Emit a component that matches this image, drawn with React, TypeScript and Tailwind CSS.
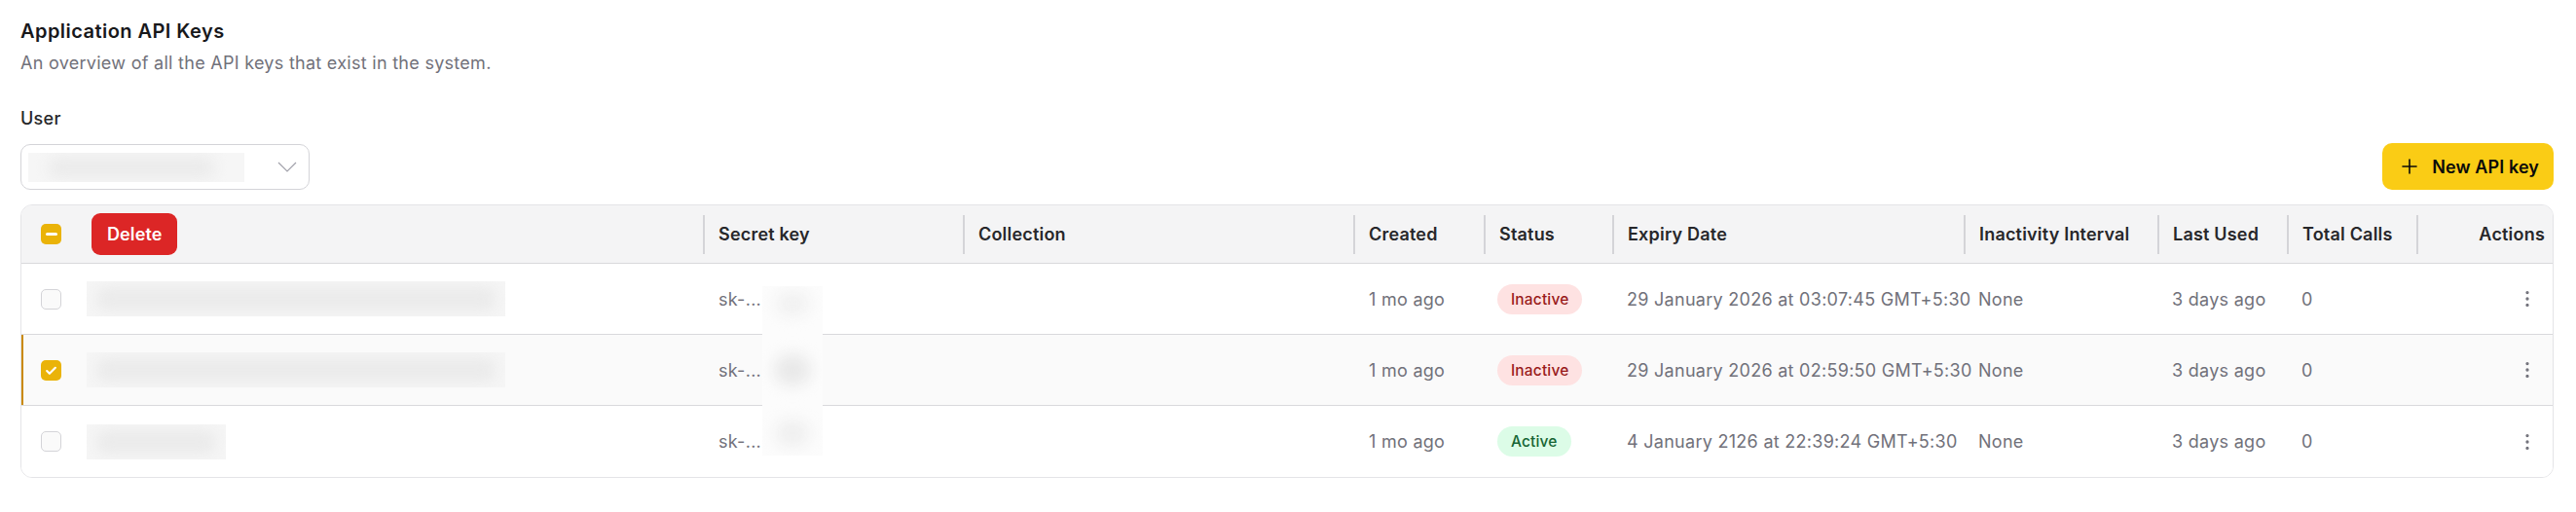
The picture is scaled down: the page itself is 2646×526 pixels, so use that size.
import { Plus, EllipsisVertical } from "lucide-react"

const cols = "grid grid-cols-[56px_644px_267px_401px_134px_132px_361px_199px_133px_133px_140px]"

type Row = {
  nameWidth: number
  expiry: string
  status: "Active" | "Inactive"
  selected: boolean
}

const rows: Row[] = [
  { nameWidth: 430, expiry: "29 January 2026 at 03:07:45 GMT+5:30", status: "Inactive", selected: false },
  { nameWidth: 430, expiry: "29 January 2026 at 02:59:50 GMT+5:30", status: "Inactive", selected: true },
  { nameWidth: 143, expiry: "4 January 2126 at 22:39:24 GMT+5:30", status: "Active", selected: false },
]

function Checkbox({ state }: { state: "off" | "on" | "some" }) {
  if (state === "off") {
    return <div className="h-[21px] w-[21px] rounded-[5px] border border-[#d4d4d8] bg-[#fafafa]" />
  }
  return (
    <div className="flex h-[21px] w-[21px] items-center justify-center rounded-[5px] bg-[#eab308]">
      {state === "some" ? (
        <div className="h-[3px] w-[12px] rounded-full bg-white" />
      ) : (
        <svg width="13" height="13" viewBox="0 0 24 24" fill="none" stroke="white" strokeWidth="4" strokeLinecap="round" strokeLinejoin="round">
          <path d="M4 13l5 5L20 7" />
        </svg>
      )}
    </div>
  )
}

function HeadCell({ children, right }: { children?: React.ReactNode; right?: boolean }) {
  return (
    <div className="flex items-center">
      <div className={`flex h-[40px] w-full items-center border-l-2 border-[#d4d4d8] ${right ? "justify-end pr-[8px]" : "pl-[14px]"}`}>
        {children}
      </div>
    </div>
  )
}

function Blurred({ width }: { width: number }) {
  return (
    <div className="relative h-[36px] overflow-hidden bg-[#f5f5f5]" style={{ width }}>
      <div className="absolute inset-y-[6px] left-[10px] right-[10px] rounded-full bg-[#ebebeb] blur-[6px]" />
    </div>
  )
}

export default function App() {
  return (
    <div className="min-h-screen bg-white pl-[21px] pr-[23px] pt-[18px] font-['Inter','Liberation_Sans',sans-serif] text-[18px] leading-[25px] tracking-[0.28px]">
      <h1 className="text-[20px] font-semibold leading-[28px] tracking-[0.45px] text-[#18181b]">Application API Keys</h1>
      <p className="mt-[6px] text-[#71717a]">An overview of all the API keys that exist in the system.</p>

      <div className="mt-[32px] flex items-end justify-between">
        <div>
          <label className="block font-medium text-[#27272a]">User</label>
          <div className="mt-[14px] flex h-[47px] w-[297px] items-center justify-between rounded-[10px] border border-[#d4d4d8] pl-[7px] pr-[12px]">
            <div className="relative h-[30px] w-[222px] overflow-hidden bg-[#f6f6f6]">
              <div className="absolute inset-y-[4px] left-[20px] right-[30px] rounded-full bg-[#ebebeb] blur-[7px]" />
            </div>
            <svg width="20" height="11" viewBox="0 0 20 11" fill="none" stroke="#a1a1aa" strokeWidth="1.2">
              <path d="M1 1l9 9 9-9" />
            </svg>
          </div>
        </div>
        <button className="flex h-[48px] items-center gap-[11px] rounded-[10px] bg-[#facc15] pl-[16px] pr-[15px] font-semibold tracking-[0.1px] text-[#0a0a0a]">
          <Plus size={24} strokeWidth={1.6} />
          New API key
        </button>
      </div>

      <div className="relative mt-[15px] overflow-hidden rounded-[12px] border border-[#e4e4e7]">
        <div className={`${cols} h-[60px] border-b border-[#d9d9dc] bg-[#f4f4f5] font-semibold tracking-[0.2px] text-[#27272a]`}>
          <div className="flex items-center pl-[20px]">
            <Checkbox state="some" />
          </div>
          <div className="flex items-center pl-[16px]">
            <button className="h-[43px] rounded-[9px] bg-[#dc2626] px-[16px] font-semibold tracking-[0.1px] text-white">Delete</button>
          </div>
          <HeadCell>Secret key</HeadCell>
          <HeadCell>Collection</HeadCell>
          <HeadCell>Created</HeadCell>
          <HeadCell>Status</HeadCell>
          <HeadCell>Expiry Date</HeadCell>
          <HeadCell>Inactivity Interval</HeadCell>
          <HeadCell>Last Used</HeadCell>
          <HeadCell>Total Calls</HeadCell>
          <HeadCell right>Actions</HeadCell>
        </div>

        {rows.map((row, i) => (
          <div
            key={i}
            className={`${cols} h-[73px] whitespace-nowrap text-[#71717a] ${i < rows.length - 1 ? "border-b border-[#d9d9dc]" : ""} ${row.selected ? "bg-[#fafafa] shadow-[inset_2px_0_0_#ca8a04]" : "bg-white"}`}
          >
            <div className="flex items-center pl-[20px]">
              <Checkbox state={row.selected ? "on" : "off"} />
            </div>
            <div className="flex items-center pl-[11px]">
              <Blurred width={row.nameWidth} />
            </div>
            <div className="flex items-center pl-[16px]">sk-...</div>
            <div />
            <div className="flex items-center pl-[16px]">1 mo ago</div>
            <div className="flex items-center pl-[14px]">
              {row.status === "Inactive" ? (
                <span className="rounded-full bg-[#fee2e2] px-[14px] py-[3px] text-[15.5px] font-medium leading-[25px] tracking-[0.15px] text-[#991b1b]">Inactive</span>
              ) : (
                <span className="rounded-full bg-[#dcfce7] px-[14px] py-[3px] text-[15.5px] font-medium leading-[25px] tracking-[0.15px] text-[#166534]">Active</span>
              )}
            </div>
            <div className="flex items-center pl-[15px]">{row.expiry}</div>
            <div className="flex items-center pl-[15px]">None</div>
            <div className="flex items-center pl-[15px]">3 days ago</div>
            <div className="flex items-center pl-[15px]">0</div>
            <div className="flex items-center justify-end pr-[15px]">
              <EllipsisVertical size={22} strokeWidth={1.6} className="text-[#71717a]" />
            </div>
          </div>
        ))}

        <div className="absolute left-[761px] top-[83px] h-[174px] w-[62px] overflow-hidden bg-[#fcfcfc]">
          <div className="absolute left-[14px] top-[6px] h-[24px] w-[34px] rounded-full bg-[#f0f0f0] blur-[8px]" />
          <div className="absolute left-[12px] top-[70px] h-[32px] w-[38px] rounded-full bg-[#e8e8e8] blur-[8px]" />
          <div className="absolute left-[14px] top-[138px] h-[26px] w-[34px] rounded-full bg-[#eeeeee] blur-[8px]" />
        </div>
      </div>
    </div>
  )
}
